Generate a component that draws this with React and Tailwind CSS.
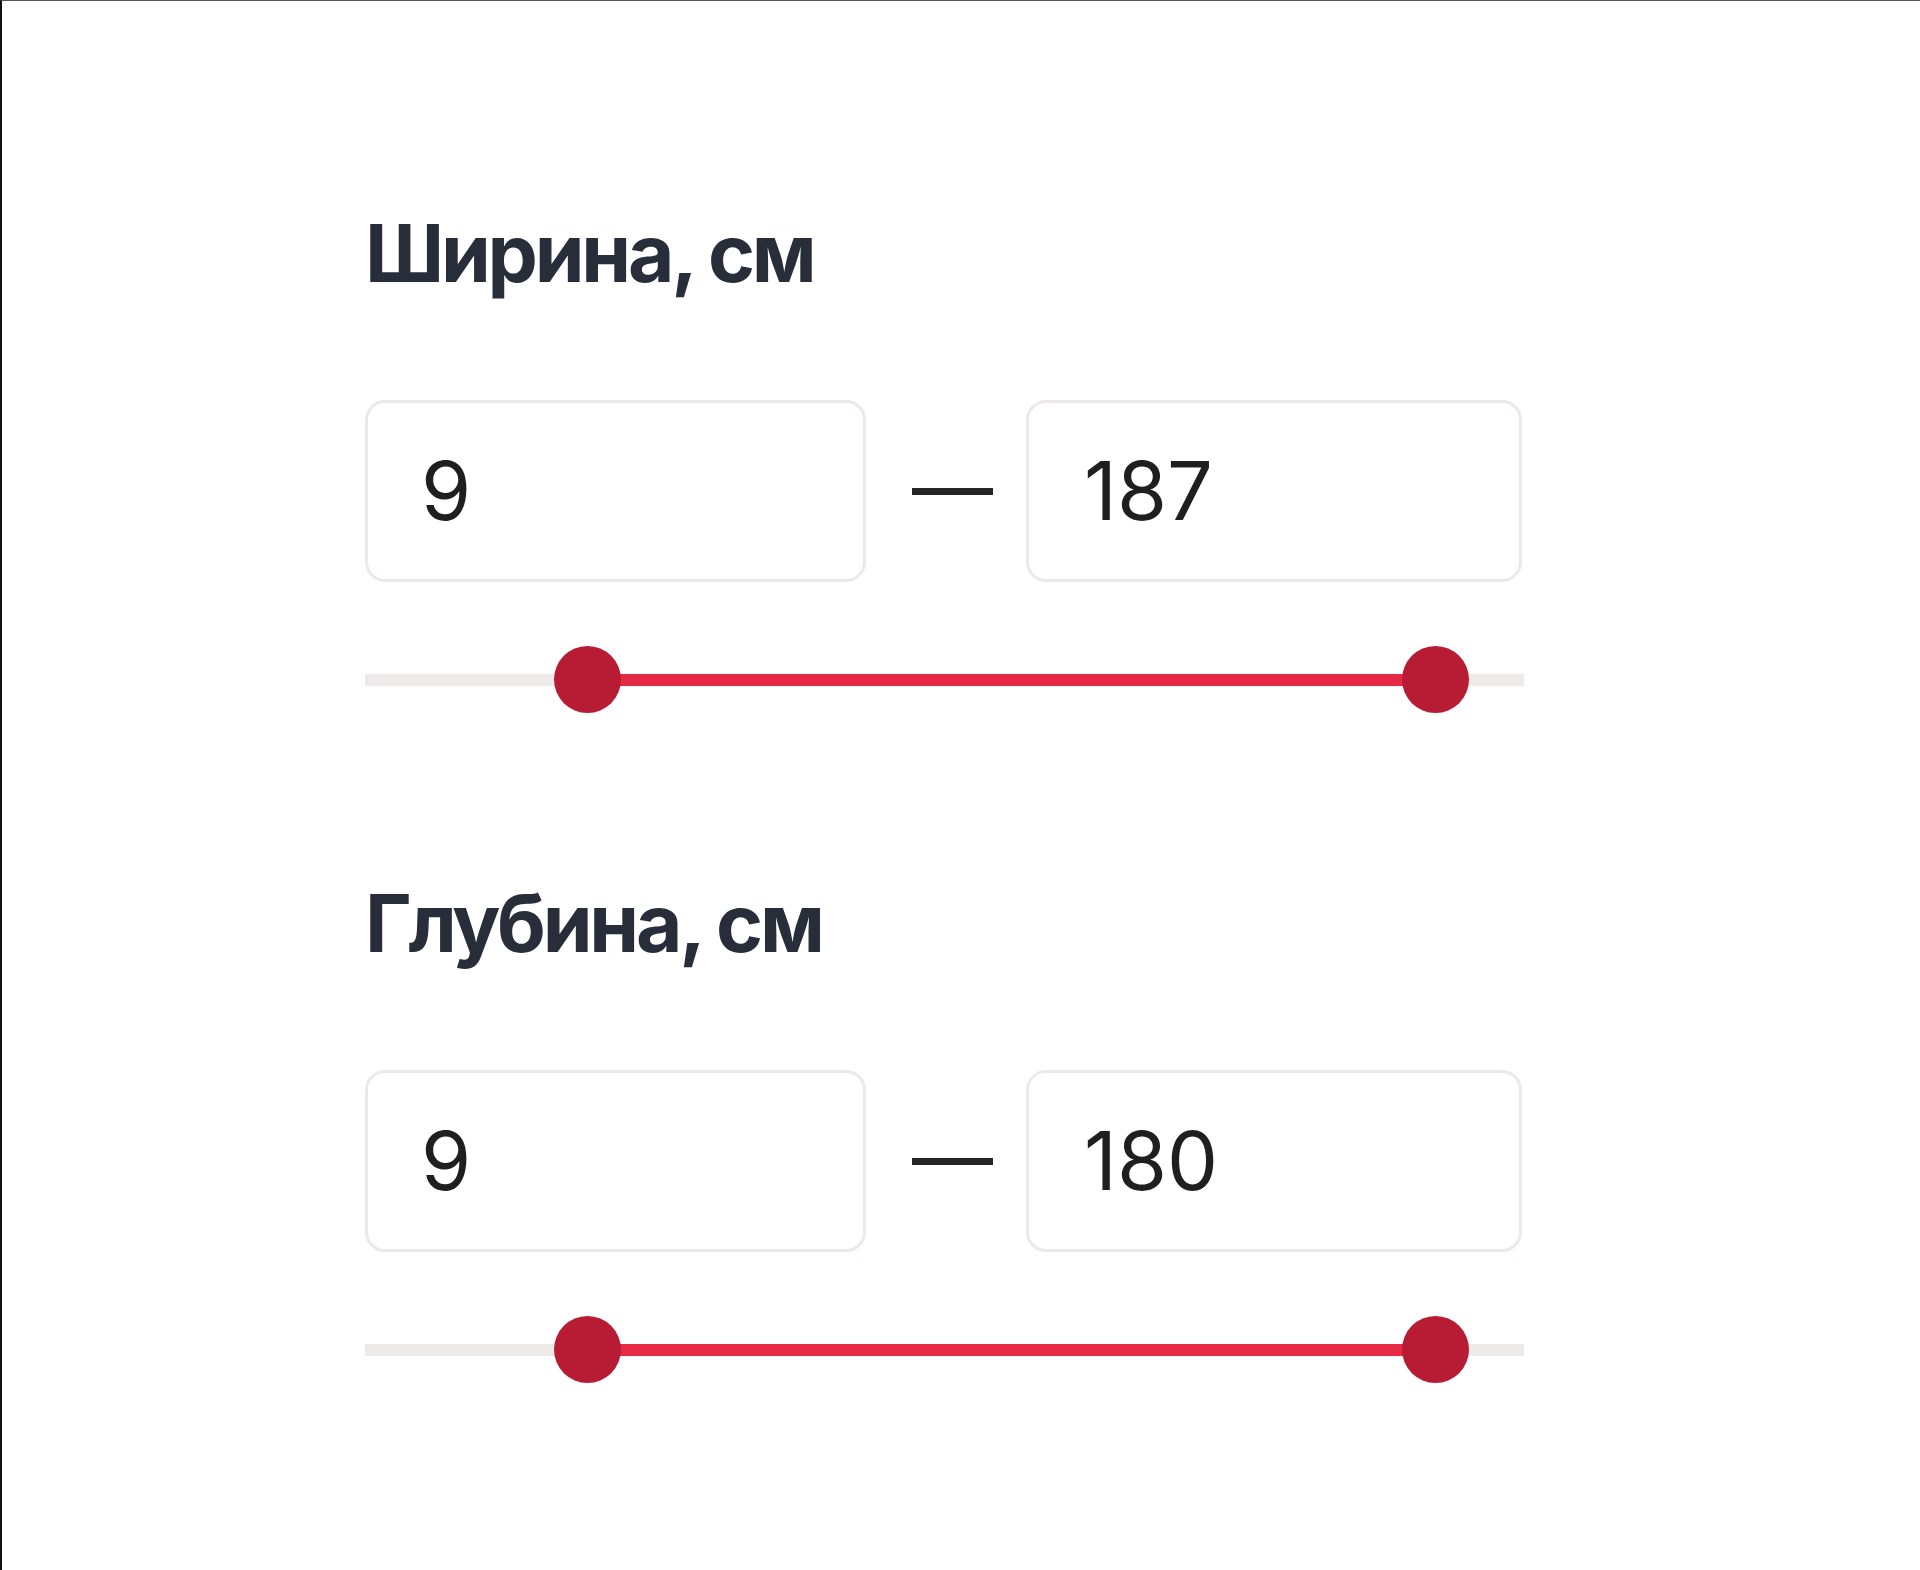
import React from 'react';

const filters = [
  { title: 'Ширина, см', from: 9, to: 187, minPos: 19.2, maxPos: 92.4 },
  { title: 'Глубина, см', from: 9, to: 180, minPos: 19.2, maxPos: 92.4 },
];

const RangeFilter = ({ title, from, to, minPos, maxPos }) => {
  return (
    <div className="mb-[170px]">
      <h2 className="text-[80px] leading-none font-bold tracking-[-3.2px] text-[#282d3a]">{title}</h2>

      <div className="mt-[107px] flex items-center">
        <div className="w-[501px] h-[182px] border-[3px] border-[#eee8e9] rounded-[20px] flex items-center pl-[53px] text-[81px] leading-none text-[#1f1f22]">
          {from}
        </div>
        <div className="ml-[46px] mr-[33px] w-[81px] h-[7px] bg-[#262626]" />
        <div className="w-[496px] h-[182px] border-[3px] border-[#eee8e9] rounded-[20px] flex items-center pl-[55px] text-[81px] leading-none text-[#1f1f22]">
          {to}
        </div>
      </div>

      {/* slider */}
      <div className="relative mt-[64px] h-[67px] w-[1159px] flex items-center">
        <div className="w-full h-[12px] bg-[#eeeaea]" />
        <div
          className="absolute h-[12px] bg-[#e62a45]"
          style={{ left: `${minPos}%`, width: `${maxPos - minPos}%` }}
        />
        <div
          className="absolute top-0 w-[67px] h-[67px] -ml-[34px] rounded-full bg-[#b81c35]"
          style={{ left: `${minPos}%` }}
        />
        <div
          className="absolute top-0 w-[67px] h-[67px] -ml-[34px] rounded-full bg-[#b81c35]"
          style={{ left: `${maxPos}%` }}
        />
      </div>
    </div>
  );
};

export default function App() {
  return (
    <div className="min-h-screen bg-white border-t border-l-2 border-t-[#555] border-l-[#111] font-['Inter',sans-serif]">
      <div className="pl-[363px] pt-[212px]">
        {filters.map(f => (
          <RangeFilter key={f.title} {...f} />
        ))}
      </div>
    </div>
  );
}
